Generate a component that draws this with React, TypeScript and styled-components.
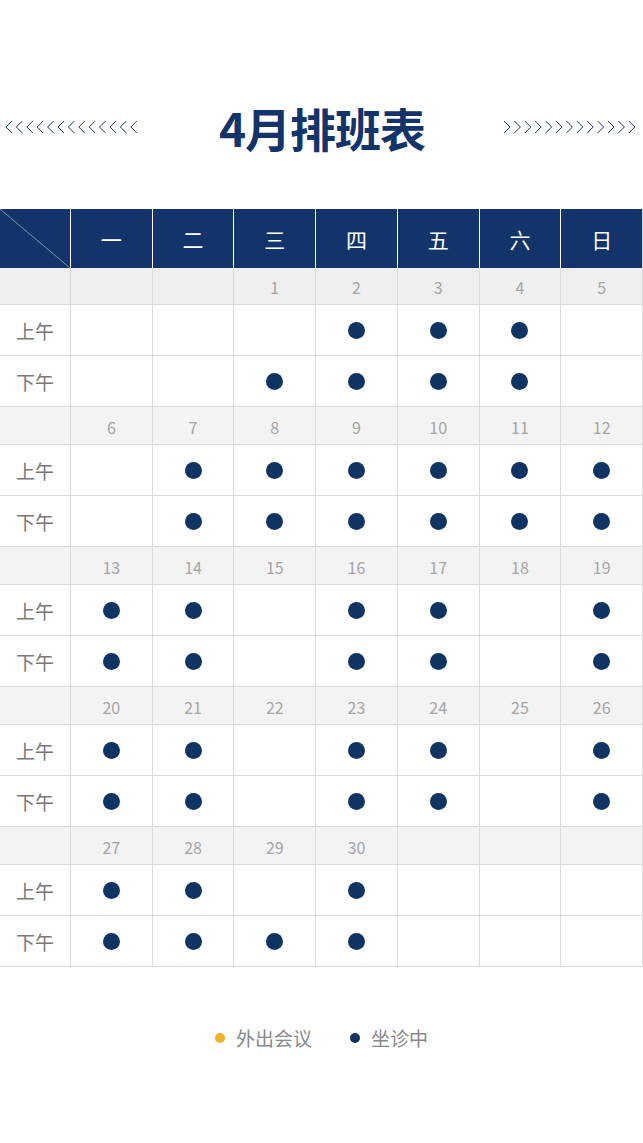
import React from 'react';
import styled, { createGlobalStyle } from 'styled-components';

const NAVY = '#13346a';
const LINE = '#dadada';

const GlobalStyle = createGlobalStyle`
  body {
    margin: 0;
    background: #fff;
    font-family: "Noto Sans CJK SC", "Noto Sans", sans-serif;
  }
`;

const Page = styled.div`
  width: 643px;
  min-height: 1143px;
  background: #fff;
`;

const Hero = styled.div`
  height: 209px;
  box-sizing: border-box;
  padding: 99px 4px 0 5px;
  display: flex;
  align-items: flex-start;
  justify-content: space-between;
`;

const Chevrons = styled.div`
  height: 56px;
  display: flex;
  align-items: center;
`;

const Title = styled.h1`
  margin: 0;
  height: 56px;
  line-height: 56px;
  font-size: 46px;
  font-weight: 700;
  color: ${NAVY};
  letter-spacing: -1px;
`;

const Table = styled.div`
  display: grid;
  grid-template-columns: 70px repeat(7, 1fr);
  grid-template-rows: 59px 36px 51px 51px repeat(4, 38px 51px 51px);
  border-bottom: 1px solid ${LINE};
  border-right: 1px solid ${LINE};
`;

const HeadCell = styled.div<{ $corner?: boolean }>`
  background: ${NAVY};
  color: #fff;
  font-size: 21px;
  display: flex;
  align-items: center;
  justify-content: center;
  border-left: ${(p) => (p.$corner ? 'none' : '1px solid #fff')};
  position: relative;
`;

const Diagonal = styled.svg`
  position: absolute;
  inset: 0;
`;

const DateCell = styled.div<{ $first?: boolean; $label?: boolean }>`
  background: ${(p) => (p.$first ? '#efefef' : '#f3f3f3')};
  color: #a5a5a5;
  font-size: 16px;
  display: flex;
  align-items: center;
  justify-content: center;
  padding-top: 2px;
  border-left: ${(p) => (p.$label ? 'none' : `1px solid ${LINE}`)};
  border-top: ${(p) => (p.$first ? 'none' : `1px solid ${LINE}`)};
`;

const Cell = styled.div<{ $label?: boolean }>`
  display: flex;
  align-items: center;
  justify-content: center;
  border-top: 1px solid ${LINE};
  border-left: ${(p) => (p.$label ? 'none' : `1px solid ${LINE}`)};
  color: #777;
  font-size: 19px;
`;

const Dot = styled.span<{ $color?: string; $size?: number }>`
  display: inline-block;
  width: ${(p) => p.$size ?? 17}px;
  height: ${(p) => p.$size ?? 17}px;
  border-radius: 50%;
  background: ${(p) => p.$color ?? '#0f3463'};
`;

const Legend = styled.div`
  margin-top: 57px;
  display: flex;
  justify-content: center;
  align-items: center;
  gap: 38px;
`;

const LegendItem = styled.div`
  display: flex;
  align-items: center;
  gap: 11px;
  color: #888;
  font-size: 19px;
`;

const Chevron = ({ dir }: { dir: 'left' | 'right' }) => (
  <svg width="136" height="14" viewBox="0 0 136 14">
    {Array.from({ length: 13 }).map((_, i) => {
      const x = i * 10.4 + 1;
      const d =
        dir === 'left'
          ? `M${x + 6} 1 L${x} 7 L${x + 6} 13`
          : `M${x} 1 L${x + 6} 7 L${x} 13`;
      return <path key={i} d={d} fill="none" stroke={NAVY} strokeWidth="1" />;
    })}
  </svg>
);

const days = ['一', '二', '三', '四', '五', '六', '日'];

type Week = {
  dates: (number | null)[];
  am: number[];
  pm: number[];
};

const weeks: Week[] = [
  { dates: [null, null, 1, 2, 3, 4, 5], am: [3, 4, 5], pm: [2, 3, 4, 5] },
  { dates: [6, 7, 8, 9, 10, 11, 12], am: [1, 2, 3, 4, 5, 6], pm: [1, 2, 3, 4, 5, 6] },
  { dates: [13, 14, 15, 16, 17, 18, 19], am: [0, 1, 3, 4, 6], pm: [0, 1, 3, 4, 6] },
  { dates: [20, 21, 22, 23, 24, 25, 26], am: [0, 1, 3, 4, 6], pm: [0, 1, 3, 4, 6] },
  { dates: [27, 28, 29, 30, null, null, null], am: [0, 1, 3], pm: [0, 1, 2, 3] },
];

const App = () => {
  return (
    <Page>
      <GlobalStyle />
      <Hero>
        <Chevrons>
          <Chevron dir="left" />
        </Chevrons>
        <Title>4月排班表</Title>
        <Chevrons>
          <Chevron dir="right" />
        </Chevrons>
      </Hero>

      <Table>
        <HeadCell $corner>
          <Diagonal width="70" height="59" viewBox="0 0 70 59">
            <line x1="0" y1="0" x2="70" y2="59" stroke="#9aa8c0" strokeWidth="0.8" />
          </Diagonal>
        </HeadCell>
        {days.map((d) => (
          <HeadCell key={d}>{d}</HeadCell>
        ))}

        {weeks.map((w, wi) => (
          <React.Fragment key={wi}>
            <DateCell $first={wi === 0} $label />
            {w.dates.map((n, i) => (
              <DateCell key={i} $first={wi === 0}>
                {n ?? ''}
              </DateCell>
            ))}
            <Cell $label>上午</Cell>
            {days.map((_, i) => (
              <Cell key={i}>{w.am.includes(i) && <Dot />}</Cell>
            ))}
            <Cell $label>下午</Cell>
            {days.map((_, i) => (
              <Cell key={i}>{w.pm.includes(i) && <Dot />}</Cell>
            ))}
          </React.Fragment>
        ))}
      </Table>

      <Legend>
        <LegendItem>
          <Dot $color="#f0b12b" $size={10} />
          外出会议
        </LegendItem>
        <LegendItem>
          <Dot $color="#0f3463" $size={10} />
          坐诊中
        </LegendItem>
      </Legend>
    </Page>
  );
};

export default App;
